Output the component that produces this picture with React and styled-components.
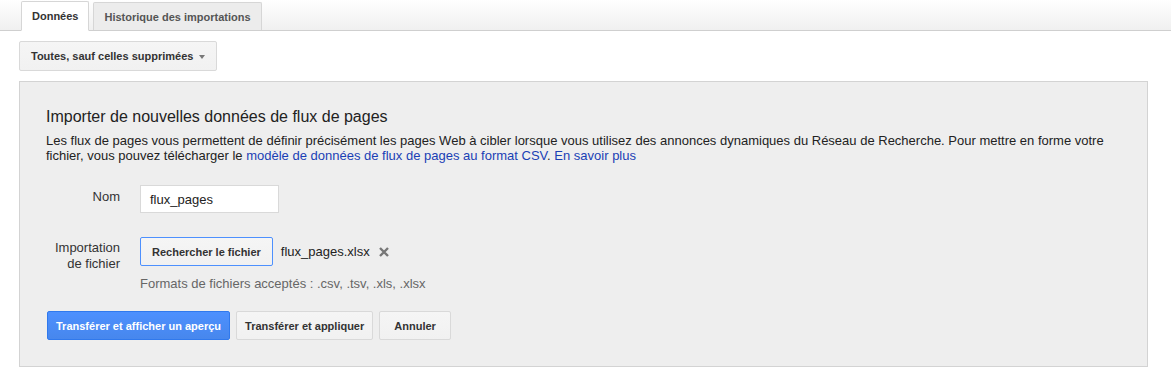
import React from 'react';
import styled, { createGlobalStyle } from 'styled-components';

const Global = createGlobalStyle`
  body {
    margin: 0;
    font-family: "Liberation Sans", Arial, sans-serif;
    color: #222;
    background: #fff;
  }
`;

const Page = styled.div`
  width: 1171px;
  height: 371px;
  overflow: hidden;
`;

const TabBar = styled.div`
  display: flex;
  align-items: flex-end;
  gap: 4px;
  height: 31px;
  padding-left: 21px;
  border-bottom: 1px solid #cfcfcf;
  background: linear-gradient(to bottom, #ffffff, #f0f0f0);
  box-sizing: border-box;
`;

const Tab = styled.div`
  height: ${p => (p.active ? '30px' : '28px')};
  margin-bottom: ${p => (p.active ? '-1px' : '0')};
  padding: 0 10px;
  display: flex;
  align-items: center;
  box-sizing: border-box;
  border: 1px solid #d6d6d6;
  border-bottom: ${p => (p.active ? '1px solid #fff' : 'none')};
  border-radius: 2px 2px 0 0;
  background: ${p => (p.active ? '#fff' : '#ececec')};
  font-size: 11px;
  font-weight: bold;
  color: ${p => (p.active ? '#333' : '#555')};
`;

const Toolbar = styled.div`
  padding: 10px 19px 0;
`;

const Button = styled.button`
  height: ${p => (p.tall ? '30px' : '29px')};
  padding: 0 ${p => p.pad || 10}px;
  border: 1px solid ${p => (p.primary ? '#3079ed' : p.focus ? '#4d90fe' : '#d9d9d9')};
  border-radius: 2px;
  background: ${p =>
    p.primary
      ? 'linear-gradient(to bottom, #4d90fe, #4787ed)'
      : 'linear-gradient(to bottom, #f5f5f5, #f1f1f1)'};
  color: ${p => (p.primary ? '#fff' : '#333')};
  font-family: "Liberation Sans", Arial, sans-serif;
  font-size: 11px;
  font-weight: bold;
  display: inline-flex;
  align-items: center;
  gap: 6px;
  cursor: default;
`;

const Caret = styled.span`
  width: 0;
  height: 0;
  border-left: 3.5px solid transparent;
  border-right: 3.5px solid transparent;
  border-top: 4px solid #777;
  margin-top: 1px;
`;

const Panel = styled.div`
  margin: 10px 23px 0 19px;
  height: 286px;
  box-sizing: border-box;
  background: #eeeeee;
  border: 1px solid #d3d3d3;
  padding: 25px 26px 0 26px;
`;

const Title = styled.h2`
  margin: 0;
  font-size: 16px;
  font-weight: normal;
  color: #222;
  line-height: 20px;
`;

const Desc = styled.p`
  margin: 6px 0 0;
  font-size: 13px;
  line-height: 15px;
  color: #222;
`;

const Link = styled.a`
  color: #1a3fb5;
  text-decoration: none;
`;

const Form = styled.div`
  display: grid;
  grid-template-columns: 74px auto;
  column-gap: 20px;
  row-gap: 24px;
  margin-top: 22px;
`;

const Label = styled.div`
  text-align: right;
  font-size: 13px;
  line-height: 16px;
  color: #333;
  padding-top: ${p => p.top || 0}px;
`;

const Input = styled.div`
  width: 139px;
  height: 28px;
  box-sizing: border-box;
  background: #fff;
  border: 1px solid #d9d9d9;
  padding: 0 9px;
  display: flex;
  align-items: center;
  font-size: 13px;
  color: #222;
`;

const FileRow = styled.div`
  display: flex;
  align-items: center;
  gap: 8px;
  font-size: 13px;
  color: #222;
`;

const Remove = styled.span`
  margin-left: 0;
  display: inline-flex;
`;

const Hint = styled.div`
  margin-top: 10px;
  font-size: 13px;
  color: #666;
`;

const Actions = styled.div`
  display: flex;
  gap: 6px;
  margin-top: 20px;
  margin-left: 1px;
`;

export default function App() {
  return (
    <Page>
      <Global />
      <TabBar>
        <Tab active>Données</Tab>
        <Tab>Historique des importations</Tab>
      </TabBar>
      <Toolbar>
        <Button tall pad={11}>
          Toutes, sauf celles supprimées <Caret />
        </Button>
      </Toolbar>
      <Panel>
        <Title>Importer de nouvelles données de flux de pages</Title>
        <Desc>
          Les flux de pages vous permettent de définir précisément les pages Web à cibler lorsque vous utilisez des
          annonces dynamiques du Réseau de Recherche. Pour mettre en forme votre fichier, vous pouvez télécharger le{' '}
          <Link>modèle de données de flux de pages au format CSV</Link>. <Link>En savoir plus</Link>
        </Desc>
        <Form>
          <Label top={4}>Nom</Label>
          <Input>flux_pages</Input>
          <Label top={3}>
            Importation
            <br />
            de fichier
          </Label>
          <div>
            <FileRow>
              <Button focus pad={11}>Rechercher le fichier</Button>
              <span>flux_pages.xlsx</span>
              <Remove>
                <svg width="12" height="12" viewBox="0 0 12 12">
                  <path d="M2 2 L10 10 M10 2 L2 10" stroke="#777" strokeWidth="2.4" />
                </svg>
              </Remove>
            </FileRow>
            <Hint>Formats de fichiers acceptés : .csv, .tsv, .xls, .xlsx</Hint>
          </div>
        </Form>
        <Actions>
          <Button primary pad={8}>Transférer et afficher un aperçu</Button>
          <Button pad={8}>Transférer et appliquer</Button>
          <Button pad={14}>Annuler</Button>
        </Actions>
      </Panel>
    </Page>
  );
}
